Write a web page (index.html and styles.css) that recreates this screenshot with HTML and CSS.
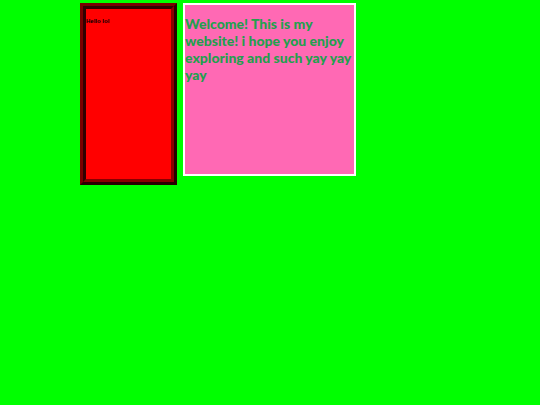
FILE: index.html
```
<!DOCTYPE html>
<html lang="en">
<head>
    <meta charset="UTF-8">
    <meta name="viewport" content="width=device-width, initial-scale=1.0">
    <title>My Website</title>
    <link rel="stylesheet" href="styles.css">
</head>
<body>

<div class="container">
    <div class="sidebar">
        <div class="sidebar-inner">
            <p>Hello lol</p>
        </div>
    </div>

    <div class="main">
        <p>Welcome! This is my website! i hope you enjoy exploring and such yay yay yay</p>
    </div>
</div>

</body>
</html>
```
FILE: styles.css
```
body {
    background-color: #00ff00;
    font-family: Lato, "Open Sans", sans-serif;
    font-weight: 900;
    margin: 0;
}

.container {
    display: flex;
    align-items: flex-start;
    gap: 6px;
    max-width: 380px;
    margin: 0 auto;
    padding-top: 3px;
}

/* two bevels, one inside the other */
.sidebar {
    flex: 0 0 91px;
    border: 3px solid;
    border-color: #780000 #280000 #280000 #780000;
}

.sidebar-inner {
    display: flow-root;
    min-height: 170px;
    background-color: red;
    border: 3px solid;
    border-color: #300000 #880000 #880000 #300000;
    color: black;
}

.sidebar p {
    margin: 9px 0;
    font-family: "Liberation Sans", Arial, sans-serif;
    font-size: 6px;
    line-height: 7px;
}

.main {
    display: flow-root;
    flex: 0 0 169px;
    min-height: 169px;
    background-color: hotpink;
    border: 2px solid white;
    color: #22a04e;
}

.main p {
    margin: 10px 0;
    font-size: 14px;
    line-height: 17px;
}
```
